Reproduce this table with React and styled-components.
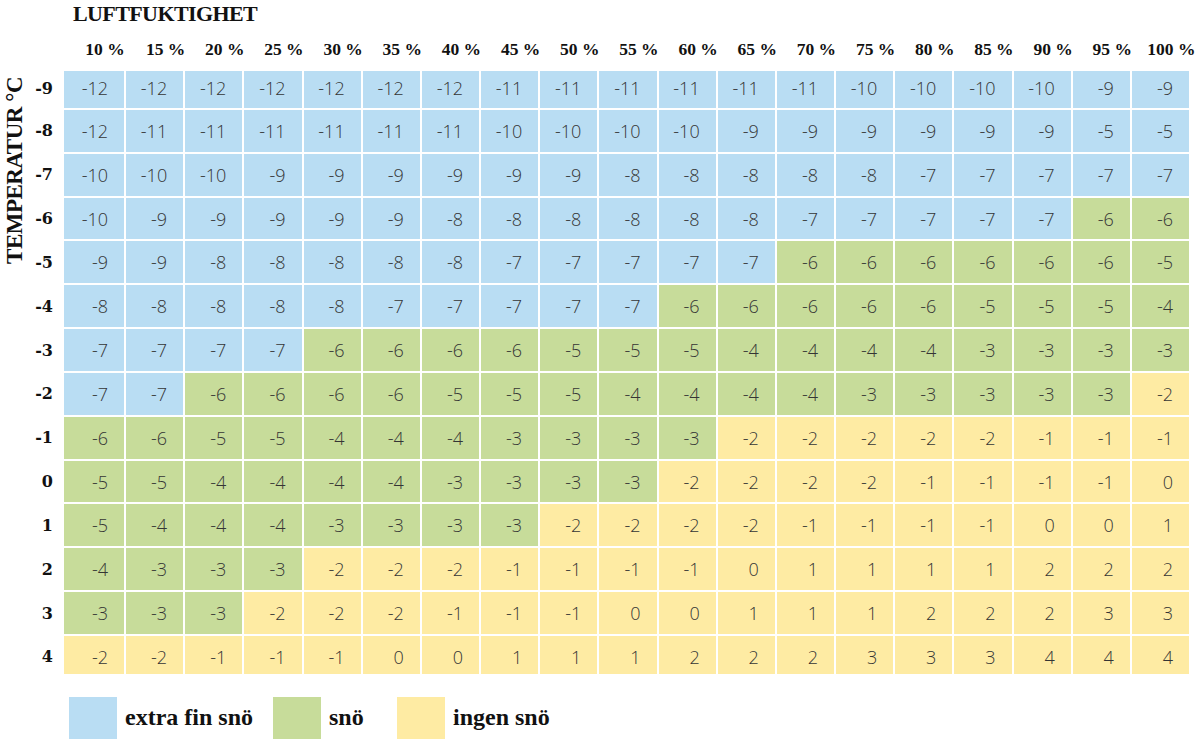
import React from "react";
import styled, { createGlobalStyle } from "styled-components";

const BLUE = "#b9ddf3";
const GREEN = "#c7dc9a";
const YELLOW = "#feeba3";

const GlobalStyle = createGlobalStyle`
  html, body { margin: 0; padding: 0; background: #ffffff; }
  * { box-sizing: border-box; }
`;

const Page = styled.div`
  width: 1199px;
  height: 745px;
  overflow: hidden;
  display: flex;
  flex-direction: column;
  background: #fff;
  color: #111;
`;

const Title = styled.h1`
  margin: 0;
  height: 29px;
  padding-left: 73px;
  font-family: "Liberation Serif", serif;
  font-weight: 700;
  font-size: 22px;
  line-height: 27px;
  letter-spacing: -0.6px;
  color: #111;
`;

const Table = styled.div`
  display: grid;
  width: 1189px;
  grid-template-columns: 28px 32px 60px repeat(18, minmax(0, 1fr));
  grid-template-rows: 40px 37px repeat(12, 41.83px) 38px;
  column-gap: 2px;
  row-gap: 2px;
`;

const AxisLabel = styled.div`
  grid-column: 1;
  grid-row: 2 / span 14;
  align-self: start;
  justify-self: center;
  margin-top: 6px;
  writing-mode: vertical-rl;
  transform: rotate(180deg);
  font-family: "Liberation Serif", serif;
  font-weight: 700;
  font-size: 23px;
  line-height: 23px;
  letter-spacing: -0.5px;
  white-space: nowrap;
  color: #111;
`;

const HeaderCell = styled.div`
  grid-column-start: ${(p) => (p.$first ? 3 : "auto")};
  min-width: 0;
  display: flex;
  align-items: center;
  justify-content: center;
  padding-left: 22px;
  white-space: nowrap;
  font-family: "Liberation Serif", serif;
  font-weight: 700;
  font-size: 17.5px;
  color: #111;
`;

const RowLabel = styled.div`
  grid-column: 2;
  display: flex;
  align-items: center;
  justify-content: flex-end;
  padding-right: 9px;
  padding-bottom: ${(p) => (p.$pos === "first" ? "3px" : "0")};
  padding-top: ${(p) => (p.$pos === "last" ? "3px" : "0")};
  font-family: "DejaVu Serif", serif;
  font-weight: 700;
  font-size: 16px;
  color: #111;
`;

const Cell = styled.div`
  min-width: 0;
  display: flex;
  align-items: center;
  justify-content: flex-end;
  padding-right: 16px;
  padding-bottom: ${(p) => (p.$pos === "first" ? "4px" : "0")};
  padding-top: ${(p) => (p.$pos === "last" ? "4px" : "0")};
  background: ${(p) => p.$bg};
  font-family: "Open Sans", sans-serif;
  font-weight: 300;
  font-size: 18px;
  color: #353535;
`;

const Legend = styled.div`
  display: flex;
  align-items: center;
  margin-top: 23px;
  padding-left: 69px;
`;

const LegendItem = styled.div`
  display: flex;
  align-items: center;
  gap: 8px;
  width: ${(p) => (p.$width ? `${p.$width}px` : "auto")};
`;

const Swatch = styled.div`
  width: 48px;
  height: 42px;
  background: ${(p) => p.$bg};
`;

const LegendText = styled.span`
  font-family: "Liberation Serif", serif;
  font-weight: 700;
  font-size: 24px;
  color: #111;
`;

const humidity = [10, 15, 20, 25, 30, 35, 40, 45, 50, 55, 60, 65, 70, 75, 80, 85, 90, 95, 100];

const rows = [
  { t: "-9", g: 19, y: 19, v: [-12, -12, -12, -12, -12, -12, -12, -11, -11, -11, -11, -11, -11, -10, -10, -10, -10, -9, -9] },
  { t: "-8", g: 19, y: 19, v: [-12, -11, -11, -11, -11, -11, -11, -10, -10, -10, -10, -9, -9, -9, -9, -9, -9, -5, -5] },
  { t: "-7", g: 19, y: 19, v: [-10, -10, -10, -9, -9, -9, -9, -9, -9, -8, -8, -8, -8, -8, -7, -7, -7, -7, -7] },
  { t: "-6", g: 17, y: 19, v: [-10, -9, -9, -9, -9, -9, -8, -8, -8, -8, -8, -8, -7, -7, -7, -7, -7, -6, -6] },
  { t: "-5", g: 12, y: 19, v: [-9, -9, -8, -8, -8, -8, -8, -7, -7, -7, -7, -7, -6, -6, -6, -6, -6, -6, -5] },
  { t: "-4", g: 10, y: 19, v: [-8, -8, -8, -8, -8, -7, -7, -7, -7, -7, -6, -6, -6, -6, -6, -5, -5, -5, -4] },
  { t: "-3", g: 4, y: 19, v: [-7, -7, -7, -7, -6, -6, -6, -6, -5, -5, -5, -4, -4, -4, -4, -3, -3, -3, -3] },
  { t: "-2", g: 2, y: 18, v: [-7, -7, -6, -6, -6, -6, -5, -5, -5, -4, -4, -4, -4, -3, -3, -3, -3, -3, -2] },
  { t: "-1", g: 0, y: 11, v: [-6, -6, -5, -5, -4, -4, -4, -3, -3, -3, -3, -2, -2, -2, -2, -2, -1, -1, -1] },
  { t: "0", g: 0, y: 10, v: [-5, -5, -4, -4, -4, -4, -3, -3, -3, -3, -2, -2, -2, -2, -1, -1, -1, -1, 0] },
  { t: "1", g: 0, y: 8, v: [-5, -4, -4, -4, -3, -3, -3, -3, -2, -2, -2, -2, -1, -1, -1, -1, 0, 0, 1] },
  { t: "2", g: 0, y: 4, v: [-4, -3, -3, -3, -2, -2, -2, -1, -1, -1, -1, 0, 1, 1, 1, 1, 2, 2, 2] },
  { t: "3", g: 0, y: 3, v: [-3, -3, -3, -2, -2, -2, -1, -1, -1, 0, 0, 1, 1, 1, 2, 2, 2, 3, 3] },
  { t: "4", g: 0, y: 0, v: [-2, -2, -1, -1, -1, 0, 0, 1, 1, 1, 2, 2, 2, 3, 3, 3, 4, 4, 4] },
];

const colorFor = (row, i) => (i < row.g ? BLUE : i < row.y ? GREEN : YELLOW);

export default function App() {
  return (
    <>
      <GlobalStyle />
      <Page>
        <Title>LUFTFUKTIGHET</Title>
        <Table>
          <AxisLabel>TEMPERATUR °C</AxisLabel>
          {humidity.map((h, i) => (
            <HeaderCell key={h} $first={i === 0}>
              {h} %
            </HeaderCell>
          ))}
          {rows.map((row, ri) => {
            const pos = ri === 0 ? "first" : ri === rows.length - 1 ? "last" : "mid";
            return (
              <React.Fragment key={row.t}>
                <RowLabel $pos={pos}>{row.t}</RowLabel>
                {row.v.map((val, i) => (
                  <Cell key={i} $bg={colorFor(row, i)} $pos={pos}>
                    {val}
                  </Cell>
                ))}
              </React.Fragment>
            );
          })}
        </Table>
        <Legend>
          <LegendItem $width={204}>
            <Swatch $bg={BLUE} />
            <LegendText>extra fin snö</LegendText>
          </LegendItem>
          <LegendItem $width={124}>
            <Swatch $bg={GREEN} />
            <LegendText>snö</LegendText>
          </LegendItem>
          <LegendItem>
            <Swatch $bg={YELLOW} />
            <LegendText>ingen snö</LegendText>
          </LegendItem>
        </Legend>
      </Page>
    </>
  );
}
